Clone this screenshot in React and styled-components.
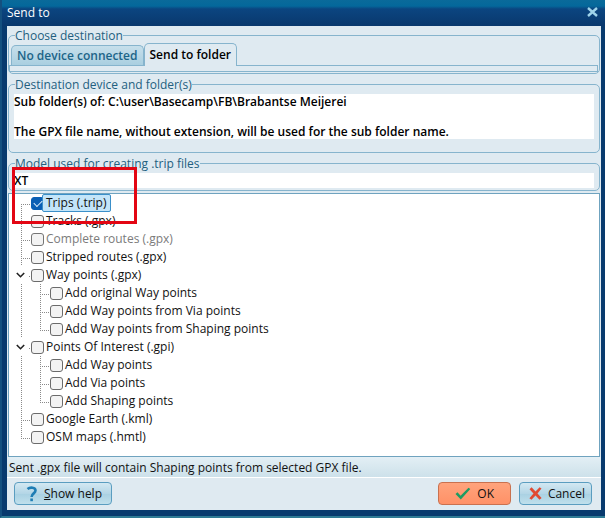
import React, { useState } from "react";
import styled, { createGlobalStyle, css } from "styled-components";

const GlobalStyle = createGlobalStyle`
    * {
        box-sizing: border-box;
    }

    body {
        margin: 0;
    }

    body, button, input, textarea {
        font-family: "Open Sans", "Noto Sans", sans-serif;
        font-size: 12px;
        line-height: 15px;
    }
`

const Window = styled.div`
    display: flex;
    flex-direction: column;
    min-height: 100vh;
    padding: 0 4px 6px 5px;
    background: #083a6e;
    border-left: 2px solid #14507f;
    border-bottom: 2px solid #2f7b95;
`

const TitleBar = styled.header`
    display: flex;
    align-items: center;
    justify-content: space-between;
    height: 26px;
    margin: 0 -4px 0 -5px;
    padding: 0 7px 2px 5px;
    color: #fff;
    background: linear-gradient(#0a6a9a 0, #04689b 6px, #0b4580 9px, #09386d 100%);
`

const Title = styled.h1`
    margin: 0;
    font-size: 12px;
    font-weight: normal;
`

const CloseButton = styled.button`
    display: flex;
    padding: 0;
    border: 0;
    background: none;
`

const Body = styled.main`
    display: flex;
    flex: 1;
    flex-direction: column;
    background: #dfeaf1;
`

const Panels = styled.div`
    display: flex;
    flex: 1;
    flex-direction: column;
    gap: 3px;
    padding: 2px 1px 0;
`

const Group = styled.fieldset`
    min-width: 0;
    margin: 0;
    padding: ${({ $padding }) => $padding};
    border: 1px solid #86b4cd;
    border-radius: 5px;

    legend {
        margin-left: ${({ $indent }) => $indent};
        padding: 0;
        color: #23607f;
    }
`

const Tabs = styled.div`
    display: flex;
    align-items: flex-end;
    height: 22px;
    padding-left: 2px;
`

const Tab = styled.button`
    height: 20px;
    padding: 0 5px;
    font-weight: 600;
    color: #1c6488;
    white-space: nowrap;
    background: linear-gradient(#c6dfeb, #aacfe0);
    border: 1px solid #86b4cd;
    border-bottom: 0;
    border-radius: 5px 5px 0 0;

    ${({ $active }) => $active && css`
        height: 23px;
        margin-bottom: -1px;
        padding-bottom: 2px;
        color: #000;
        background: #dfeaf1;
    `}
`

const TabPage = styled.div`
    height: 7px;
    border: 1px solid #86b4cd;
`

const fieldStyle = css`
    display: block;
    width: 100%;
    padding: 0;
    font-weight: 600;
    color: #000;
    background: #fff;
    border: 0;
    outline: 0;
`

const Memo = styled.textarea`
    ${fieldStyle}
    height: 45px;
    resize: none;
    overflow: hidden;
`

const ModelInput = styled.input`
    ${fieldStyle}
    height: 15px;
`

const Tree = styled.ul`
    flex: 1;
    margin: -1px 0 0;
    padding: 0 3px;
    list-style: none;
    background: #fff;
    border: 1px solid #6fa3bf;
`

const TreeRow = styled.li`
    display: flex;
    align-items: center;
    height: 18px;
`

const dots = "#8a8a8a 0 1px, transparent 1px 2px";

const lines = {
    pass: css`
        background: repeating-linear-gradient(to bottom, ${dots}) 9px 0 / 1px 100% no-repeat;
    `,
    branch: css`
        background:
            repeating-linear-gradient(to bottom, ${dots}) 9px 0 / 1px 100% no-repeat,
            repeating-linear-gradient(to right, ${dots}) 9px 10px / 9px 1px no-repeat;
    `,
    first: css`
        background:
            repeating-linear-gradient(to bottom, ${dots}) 9px 10px / 1px 8px no-repeat,
            repeating-linear-gradient(to right, ${dots}) 9px 10px / 9px 1px no-repeat;
    `,
    last: css`
        background:
            repeating-linear-gradient(to bottom, ${dots}) 9px 0 / 1px 10px no-repeat,
            repeating-linear-gradient(to right, ${dots}) 9px 10px / 9px 1px no-repeat;
    `,
    node: css`
        background: linear-gradient(#8a8a8a, #8a8a8a) 17px 10px / 1px 1px no-repeat;
    `,
}

const Guide = styled.span`
    display: flex;
    align-items: center;
    flex: none;
    width: 19px;
    height: 18px;
    padding-left: 4px;
    ${({ $line }) => lines[$line]}
`

const Checkbox = styled.input`
    appearance: none;
    display: grid;
    place-items: center;
    flex: none;
    width: 13px;
    height: 13px;
    margin: 0;
    background: #f3f3f3;
    border: 1px solid #6b6b6b;
    border-radius: 3px;

    &:checked {
        background: #0a5fb4;
        border-color: #0a5fb4;
    }

    &:checked::after {
        content: "";
        width: 7px;
        height: 4px;
        margin-bottom: 2px;
        border: solid #d9ecfb;
        border-width: 0 0 1px 1px;
        transform: rotate(-45deg);
    }

    &:disabled {
        border-color: #757575;
    }
`

const TreeLabel = styled.label`
    height: 18px;
    margin-left: -2px;
    padding: 0 3px;
    line-height: 16px;
    white-space: nowrap;
    color: ${({ $disabled }) => ($disabled ? "#7b7b7b" : "#111")};
    border: 1px solid transparent;

    ${({ $selected }) => $selected && css`
        background: #c3e5f9;
        border-color: #3a8fc9;
        border-radius: 2px;
    `}
`

/* Marker drawn over the first tree rows */
const Highlight = styled.div`
    position: absolute;
    top: 167px;
    left: 12px;
    width: 125px;
    height: 57px;
    border: 3px solid #e30613;
    pointer-events: none;
`

const StatusBar = styled.p`
    height: 21px;
    margin: 0;
    padding: 3px 2px;
    color: #111;
    background: linear-gradient(#e3eff5, #cde1ea);
    border-bottom: 1px solid #fff;
`

const Footer = styled.footer`
    display: flex;
    gap: 8px;
    padding: 4px 9px 5px 7px;
`

const Button = styled.button`
    display: flex;
    align-items: center;
    justify-content: flex-end;
    gap: 6px;
    width: ${({ $wide }) => ($wide ? "98px" : "73px")};
    height: 23px;
    padding: 0 ${({ $end }) => $end || "6px"} 0 0;
    color: #111;
    white-space: nowrap;
    background: linear-gradient(#d3e8f2, #b4d6e6 50%, #a8d0e2 50%, #c0e0ec);
    border: 1px solid #5a9dc0;
    border-radius: 4px;

    ${({ $primary }) => $primary && css`
        background: linear-gradient(#ffa37c, #ff9167);
        border-color: #c9714f;
    `}
`

const Spacer = styled.div`
    flex: 1;
`

const ChevronIcon = () => (
    <svg width="9" height="8" viewBox="0 0 9 8" fill="none" stroke="#222" strokeWidth="1.6">
        <path d="M0.8 2 L4.5 5.7 L8.2 2" />
    </svg>
)

const CloseIcon = () => (
    <svg width="11" height="10" viewBox="0 0 11 10" fill="none" stroke="#9fd3ea" strokeWidth="2.4">
        <path d="M1 1 L10 9 M10 1 L1 9" />
    </svg>
)

const HelpIcon = () => (
    <svg width="12" height="16" viewBox="0 0 12 16" fill="none" stroke="#1f7db4" strokeWidth="2.6">
        <path d="M1.5 3 C4 1 9.5 1 9.5 4.5 C9.5 7.5 5.6 7.3 5.6 11" />
        <path d="M5.6 12.5 V15.2" />
    </svg>
)

const OkIcon = () => (
    <svg width="16" height="13" viewBox="0 0 16 13">
        <path d="M0.5 7 L2.5 5.3 L5.6 8.8 L13.5 0.8 L15.3 2 L5.8 12.5 Z" fill="#1c9c62" />
    </svg>
)

const CancelIcon = () => (
    <svg width="13" height="13" viewBox="0 0 13 13">
        <path d="M0.5 2.2 L2.6 0.3 L6.5 4.4 L10.6 0.3 L12.5 1.6 L8.5 6.4 L12.6 11 L10.5 12.8 L6.5 8.6 L2.5 12.8 L0.4 11.2 L4.5 6.5 Z" fill="#e04a32" />
    </svg>
)

const items = [
    { id: "trips", label: "Trips (.trip)", guides: ["first"], selected: true },
    { id: "tracks", label: "Tracks (.gpx)", guides: ["branch"] },
    { id: "complete", label: "Complete routes (.gpx)", guides: ["branch"], disabled: true },
    { id: "stripped", label: "Stripped routes (.gpx)", guides: ["branch"] },
    { id: "way", label: "Way points (.gpx)", guides: ["node"] },
    { id: "way-original", label: "Add original Way points", guides: ["pass", "branch"] },
    { id: "way-via", label: "Add Way points from Via points", guides: ["pass", "branch"] },
    { id: "way-shaping", label: "Add Way points from Shaping points", guides: ["pass", "last"] },
    { id: "poi", label: "Points Of Interest (.gpi)", guides: ["node"] },
    { id: "poi-way", label: "Add Way points", guides: ["pass", "branch"] },
    { id: "poi-via", label: "Add Via points", guides: ["pass", "branch"] },
    { id: "poi-shaping", label: "Add Shaping points", guides: ["pass", "last"] },
    { id: "kml", label: "Google Earth (.kml)", guides: ["branch"] },
    { id: "osm", label: "OSM maps (.hmtl)", guides: ["last"] },
]

const folderText = "Sub folder(s) of: C:\\user\\Basecamp\\FB\\Brabantse Meijerei\n\nThe GPX file name, without extension, will be used for the sub folder name."

const App = () => {
    const [checked, setChecked] = useState({ trips: true });
    const [model, setModel] = useState("XT");

    const toggle = id => setChecked({ ...checked, [id]: !checked[id] });

    return (
        <Window>
            <GlobalStyle />
            <TitleBar>
                <Title>Send to</Title>
                <CloseButton aria-label="Close"><CloseIcon /></CloseButton>
            </TitleBar>
            <Body>
                <Panels>
                    <Group $padding="0 1px 1px 0" $indent="6px">
                        <legend>Choose destination</legend>
                        <Tabs role="tablist">
                            <Tab role="tab" aria-selected="false">No device connected</Tab>
                            <Tab role="tab" aria-selected="true" $active>Send to folder</Tab>
                        </Tabs>
                        <TabPage role="tabpanel" />
                    </Group>
                    <Group $padding="2px 5px 13px" $indent="1px">
                        <legend>Destination device and folder(s)</legend>
                        <Memo readOnly aria-label="Destination device and folder(s)" value={folderText} />
                    </Group>
                    <Group $padding="2px 5px" $indent="1px">
                        <legend>Model used for creating .trip files</legend>
                        <ModelInput
                            aria-label="Model used for creating .trip files"
                            value={model}
                            onChange={e => setModel(e.target.value)}
                        />
                    </Group>
                    <Tree>
                        {items.map(item => (
                            <TreeRow key={item.id}>
                                {item.guides.map((line, key) => (
                                    <Guide $line={line} key={key}>
                                        {line === "node" && <ChevronIcon />}
                                    </Guide>
                                ))}
                                <Checkbox
                                    type="checkbox"
                                    id={item.id}
                                    disabled={item.disabled}
                                    checked={!!checked[item.id]}
                                    onChange={() => toggle(item.id)}
                                />
                                <TreeLabel htmlFor={item.id} $selected={item.selected} $disabled={item.disabled}>
                                    {item.label}
                                </TreeLabel>
                            </TreeRow>
                        ))}
                    </Tree>
                </Panels>
                <StatusBar>Sent .gpx file will contain Shaping points from selected GPX file.</StatusBar>
                <Footer>
                    <Button $wide $end="9px"><HelpIcon /><span><u>S</u>how help</span></Button>
                    <Spacer />
                    <Button $primary $end="16px"><OkIcon />OK</Button>
                    <Button><CancelIcon />Cancel</Button>
                </Footer>
            </Body>
            <Highlight />
        </Window>
    )
}

export default App;
